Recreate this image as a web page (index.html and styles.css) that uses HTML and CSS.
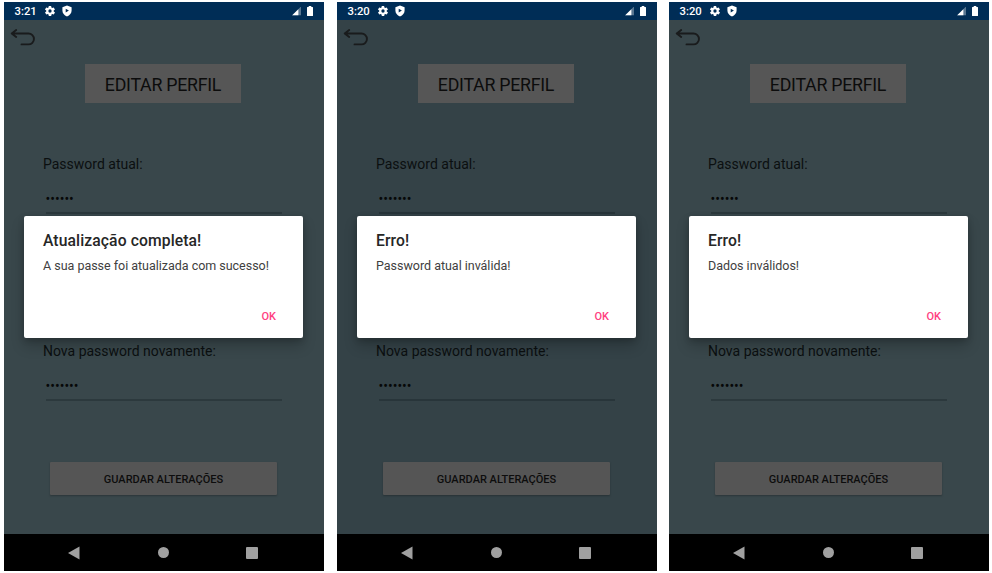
FILE: index.html
```html
<!DOCTYPE html>
<html lang="pt">
<head>
<meta charset="utf-8">
<title>Editar perfil</title>
<link rel="stylesheet" href="styles.css">
</head>
<body>
<svg width="0" height="0" class="defs">
  <symbol id="gear" viewBox="0 0 24 24"><path fill="#fff" fill-rule="evenodd" d="M19.4 13a7.8 7.8 0 0 0 0-2l2.1-1.6a.5.5 0 0 0 .1-.7l-2-3.4a.5.5 0 0 0-.6-.2l-2.5 1a7.3 7.3 0 0 0-1.7-1l-.4-2.6a.5.5 0 0 0-.5-.5h-4a.5.5 0 0 0-.5.5L9 5.100a7.3 7.3 0 0 0-1.7 1l-2.500-1a.5.5 0 0 0-.6.2l-2 3.4a.5.5 0 0 0 .1.7L4.500 11a7.8 7.8 0 0 0 0 2l-2.100 1.600a.5.5 0 0 0-.1.7l2 3.4c.1.2.4.3.6.2l2.500-1a7.3 7.3 0 0 0 1.7 1l.4 2.600c0 .3.2.5.5.5h4c.2 0 .5-.2.5-.5l.4-2.600a7.3 7.3 0 0 0 1.7-1l2.500 1c.2.1.5 0 .6-.2l2-3.4a.5.5 0 0 0-.1-.7zM12 15.300a3.300 3.300 0 1 1 0-6.600 3.300 3.300 0 0 1 0 6.600z"/></symbol>
  <symbol id="shield" viewBox="0 0 10 12"><path fill="#fff" fill-rule="evenodd" d="M5 .5 9.600 2.200V5.500C9.600 8.300 7.800 10.300 5 11.400 2.200 10.300.4 8.300.4 5.500V2.200zM3.700 3.700v3.800L6.900 5.600z"/></symbol>
  <symbol id="signal" viewBox="0 0 10 10"><path fill="#fff" fill-opacity=".35" d="M10 0v10H0z"/><path fill="#fff" d="M6.700 3.300V10H0z"/></symbol>
  <symbol id="battery" viewBox="0 0 6 10"><path fill="#fff" d="M1.700 0h2.600v1H5.500q.5 0 .5.500v8q0 .5-.5.500H.5Q0 10 0 9.500v-8Q0 1 .5 1h1.200z"/></symbol>
  <symbol id="back" viewBox="0 0 26 20"><path fill="none" stroke="#191b1c" stroke-width="1.900" stroke-linecap="round" stroke-linejoin="round" d="M6.200 2 1.700 5.500 6.200 9M1.900 5.500H18.500a5.400 5.400 0 0 1 0 10.900H11.500"/></symbol>
  <symbol id="nav-back" viewBox="0 0 12 14"><path fill="#a0a0a0" d="M11.500.5v13L0 7z"/></symbol>
</svg>
<main class="screens">
  <section class="phone">
    <header class="status"><span class="time">3:21</span><svg class="gear"><use href="#gear"/></svg><svg class="shield"><use href="#shield"/></svg><svg class="signal"><use href="#signal"/></svg><svg class="battery"><use href="#battery"/></svg></header>
    <div class="app">
      <svg class="back"><use href="#back"/></svg>
      <h1 class="title">EDITAR PERFIL</h1>
      <div class="field"><div class="label">Password atual:</div><div class="input">••••••</div></div>
      <div class="field second"><div class="label">Nova password novamente:</div><div class="input">•••••••</div></div>
      <div class="save">GUARDAR ALTERAÇÕES</div>
    </div>
    <nav class="nav"><svg class="nav-back"><use href="#nav-back"/></svg><i class="home"></i><i class="recent"></i></nav>
    <div class="dialog"><h2>Atualização completa!</h2><p>A sua passe foi atualizada com sucesso!</p><div class="ok">OK</div></div>
  </section>
  <section class="phone dim">
    <header class="status"><span class="time">3:20</span><svg class="gear"><use href="#gear"/></svg><svg class="shield"><use href="#shield"/></svg><svg class="signal"><use href="#signal"/></svg><svg class="battery"><use href="#battery"/></svg></header>
    <div class="app">
      <svg class="back"><use href="#back"/></svg>
      <h1 class="title">EDITAR PERFIL</h1>
      <div class="field"><div class="label">Password atual:</div><div class="input">•••••••</div></div>
      <div class="field second"><div class="label">Nova password novamente:</div><div class="input">•••••••</div></div>
      <div class="save">GUARDAR ALTERAÇÕES</div>
    </div>
    <nav class="nav"><svg class="nav-back"><use href="#nav-back"/></svg><i class="home"></i><i class="recent"></i></nav>
    <div class="dialog"><h2>Erro!</h2><p>Password atual inválida!</p><div class="ok">OK</div></div>
  </section>
  <section class="phone">
    <header class="status"><span class="time">3:20</span><svg class="gear"><use href="#gear"/></svg><svg class="shield"><use href="#shield"/></svg><svg class="signal"><use href="#signal"/></svg><svg class="battery"><use href="#battery"/></svg></header>
    <div class="app">
      <svg class="back"><use href="#back"/></svg>
      <h1 class="title">EDITAR PERFIL</h1>
      <div class="field"><div class="label">Password atual:</div><div class="input">••••••</div></div>
      <div class="field second"><div class="label">Nova password novamente:</div><div class="input">•••••••</div></div>
      <div class="save">GUARDAR ALTERAÇÕES</div>
    </div>
    <nav class="nav"><svg class="nav-back"><use href="#nav-back"/></svg><i class="home"></i><i class="recent"></i></nav>
    <div class="dialog"><h2>Erro!</h2><p>Dados inválidos!</p><div class="ok">OK</div></div>
  </section>
</main>
</body>
</html>
```
FILE: styles.css
```css
* { box-sizing: border-box; }
body { margin: 0; background: #fff; font-family: Roboto, sans-serif; overflow: hidden; }
h1, h2, p { margin: 0; font-weight: 400; }
.defs { position: absolute; }
.screens { display: flex; padding: 2px 0 0 4px; height: 573px; }
.phone { position: relative; flex: none; display: flex; flex-direction: column; width: 320px; height: 569px; margin-right: 12px; background: #39474b; }
.phone:first-child { margin-right: 13px; }
.phone.dim { background: #344247; }
.status { height: 18px; background: #002d56; color: #fff; display: flex; align-items: center; padding: 0 11.5px 0 10.5px; }
.time { font-size: 11.3px; font-weight: 500; line-height: 18px; width: 29.5px; padding-top: 1px; }
.gear { width: 12px; height: 12px; margin-right: 6px; }
.shield { width: 10px; height: 12px; }
.signal { width: 9.5px; height: 9.5px; margin-left: auto; margin-right: 5.5px; }
.battery { width: 6px; height: 10px; }
.app { height: 514px; display: flex; flex-direction: column; }
.back { width: 26px; height: 20px; margin: 8px 0 0 6px; }
.title { width: 156px; height: 39px; margin: 16px 0 0 81px; background: #565656; color: #0c0c0c; font-size: 17.8px; letter-spacing: -.27px; line-height: 41px; text-align: center; }
.field { margin: 51px 0 0 39px; height: 60px; }
.label { font-size: 14px; line-height: 20px; color: #0b0f10; white-space: nowrap; }
.input { margin: 11px 0 0 2.5px; width: 236.5px; height: 29px; border-bottom: 2px solid #2c393d; font-size: 14px; line-height: 28px; color: #060808; }
.dim .input { border-color: #28353a; }
.field.second { margin-top: 127px; }
.save { width: 227px; height: 33px; margin: 61px 0 0 46px; background: #555; border-radius: 1px; box-shadow: 0 1px 2px rgba(0,0,0,.25); color: #0d0d0d; font-size: 11px; font-weight: 500; line-height: 35px; text-align: center; }
.nav { height: 37px; background: #000; display: grid; grid-template-columns: 12px 12px 12px; column-gap: 77px; align-items: center; padding-left: 64px; }
.nav-back { width: 12px; height: 14px; }
.home { width: 11.5px; height: 11.5px; border-radius: 50%; background: #a0a0a0; margin-left: .5px; }
.recent { width: 12px; height: 12px; background: #a0a0a0; border-radius: 1px; }
.dialog { position: absolute; left: 20px; top: 213.5px; width: 279px; height: 122.5px; padding: 15.5px 27px 0 19px; background: #fff; border-radius: 2px; box-shadow: 0 8px 14px rgba(0,0,0,.2), 0 2px 6px rgba(0,0,0,.18); }
.dialog h2 { font-size: 15.7px; font-weight: 500; line-height: 20px; color: #262626; letter-spacing: .1px; }
.dialog p { font-size: 12.5px; line-height: 18px; margin-top: 5.5px; color: #404040; white-space: nowrap; letter-spacing: -.02px; }
.ok { margin-top: 34px; text-align: right; font-size: 11px; font-weight: 500; line-height: 16px; color: #ff4081; }
```
